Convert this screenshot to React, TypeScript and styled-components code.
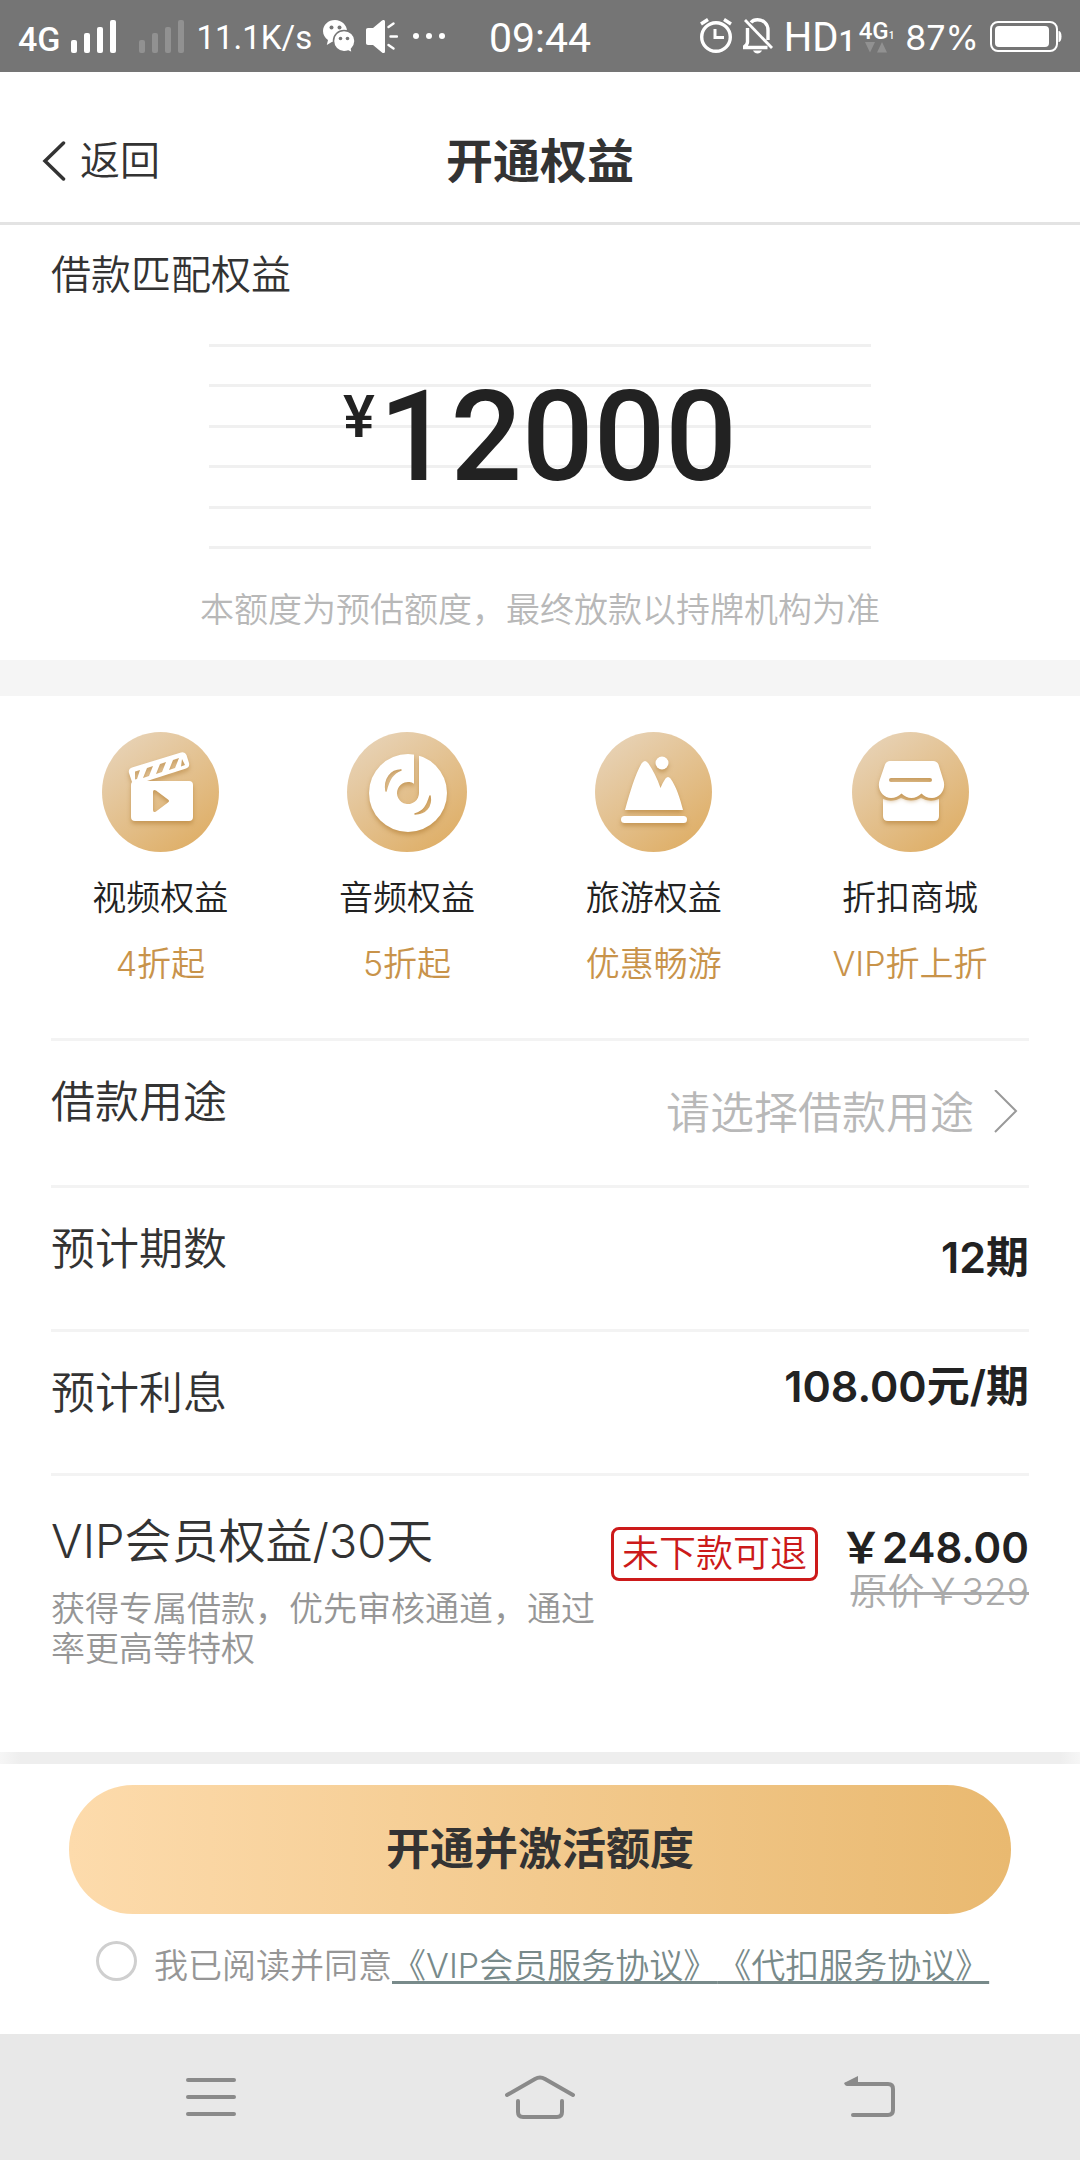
import React from "react";
import styled, { createGlobalStyle } from "styled-components";

const GlobalStyle = createGlobalStyle`
  *, *::before, *::after { box-sizing: border-box; }
  body {
    margin: 0;
    background: #ffffff;
    color: #333333;
    font-family: "Inter", "Noto Sans CJK SC", sans-serif;
    font-weight: 350;
  }
  button, select, input { font: inherit; color: inherit; margin: 0; }
  button { cursor: pointer; }
`;

const Page = styled.div`
  display: flex;
  flex-direction: column;
  min-height: 100vh;
`;

/* ---------- status bar ---------- */

const StatusBar = styled.div`
  display: grid;
  grid-template-columns: 1fr auto 1fr;
  align-items: center;
  height: 72px;
  padding: 0 18px;
  background: #757575;
  color: #ffffff;
  font-weight: 400;
  white-space: nowrap;
`;

const StatusGroup = styled.div<{ $end?: boolean }>`
  display: flex;
  align-items: center;
  justify-content: ${(p) => (p.$end ? "flex-end" : "flex-start")};
  gap: 11px;
`;

const NetworkSpeed = styled.span`
  padding-top: 3px;
  font-family: "Roboto", sans-serif;
  font-size: 33px;
  line-height: 40px;
`;

const BatteryLevel = styled.span`
  padding-top: 4px;
  font-size: 34px;
  line-height: 40px;
`;

const Clock = styled.span`
  padding-top: 4px;
  font-family: "Roboto", sans-serif;
  font-size: 41px;
  line-height: 40px;
`;

const NetworkName = styled.span`
  padding-top: 6px;
  font-family: "Roboto", sans-serif;
  font-size: 34px;
  line-height: 40px;
  font-weight: 500;
`;

const SimState = styled.span`
  display: flex;
  align-items: center;
  gap: 3px;
  font-family: "Roboto", sans-serif;
`;

const HdMark = styled.span`
  padding-top: 4px;
  font-size: 40px;
  line-height: 40px;
  small { font-size: 30px; line-height: 30px; font-weight: 500; }
`;

const DataMark = styled.span`
  display: flex;
  flex-direction: column;
  align-items: center;
  font-size: 24px;
  line-height: 22px;
  font-weight: 500;
  small { font-size: 10px; line-height: 10px; }
`;

/* ---------- title bar ---------- */

const TitleBar = styled.header`
  display: grid;
  grid-template-columns: 1fr auto 1fr;
  align-items: center;
  height: 153px;
  padding: 28px 42px 0;
  border-bottom: 3px solid #e3e3e3;
`;

const BackButton = styled.button`
  display: flex;
  align-items: center;
  justify-self: start;
  gap: 14px;
  padding: 0;
  border: 0;
  background: none;
  font-size: 40px;
  line-height: 56px;
`;

const PageTitle = styled.h1`
  margin: 0;
  font-size: 47px;
  line-height: 56px;
  font-weight: 700;
`;

/* ---------- amount ---------- */

const AmountSection = styled.section`
  padding: 22px 51px 25px;
  border-bottom: 36px solid #f5f5f5;
`;

const SectionTitle = styled.h2`
  margin: 0;
  font-size: 40px;
  line-height: 56px;
  font-weight: inherit;
`;

const AmountPanel = styled.div`
  display: grid;
  justify-items: center;
  margin: 41px 158px 0;
  > * { grid-area: 1 / 1; }
`;

const Rules = styled.div`
  display: flex;
  flex-direction: column;
  justify-content: space-between;
  width: 100%;
  height: 205px;
`;

const Rule = styled.span`
  height: 3px;
  background: #f0f0f0;
`;

const Amount = styled.p`
  display: flex;
  align-items: flex-start;
  gap: 4px;
  margin: 0;
  padding-top: 29px;
  color: #222222;
  font-family: "Roboto", sans-serif;
  font-size: 126px;
  line-height: 128px;
  font-weight: 500;
`;

const Currency = styled.span`
  padding-top: 12px;
  font-size: 60px;
  line-height: 64px;
`;

const AmountNote = styled.p`
  margin: 36px 0 0;
  color: #b8b8b8;
  font-size: 34px;
  line-height: 50px;
  text-align: center;
`;

/* ---------- benefits ---------- */

const BenefitList = styled.ul`
  display: flex;
  justify-content: space-around;
  margin: 0;
  padding: 36px 37px 51px;
  list-style: none;
`;

const Benefit = styled.li`
  display: flex;
  flex-direction: column;
  align-items: center;
  font-size: 34px;
  line-height: 46px;
  svg { display: block; }
  svg g { filter: drop-shadow(0 3px 2px rgba(170, 115, 40, 0.5)); }
`;

const BenefitName = styled.span`
  padding-top: 23px;
  color: #222222;
`;

const BenefitOffer = styled.span`
  padding-top: 20px;
  color: #c8934a;
`;

/* ---------- detail rows ---------- */

const Details = styled.div`
  flex: 1;
  padding: 0 51px;
`;

const Row = styled.div<{ $tall?: boolean }>`
  display: flex;
  align-items: flex-start;
  justify-content: space-between;
  height: ${(p) => (p.$tall ? 147 : 144)}px;
  border-top: 3px solid #f3f3f3;
  font-size: 44px;
  line-height: 60px;
`;

const RowLabel = styled.label`
  padding-top: 31px;
`;

const RowValue = styled.output<{ $raised?: boolean }>`
  padding-top: ${(p) => (p.$raised ? 24 : 39)}px;
  color: #222222;
  font-size: 43px;
  font-weight: 600;
`;

const Picker = styled.div`
  display: flex;
  align-items: center;
  align-self: center;
  gap: 20px;
  padding-right: 11px;
`;

const PurposeSelect = styled.select`
  appearance: none;
  padding: 0;
  border: 0;
  background: none;
  color: #b8b8b8;
  line-height: 60px;
`;

const PlanRow = styled.section`
  display: flex;
  align-items: flex-start;
  border-top: 3px solid #f3f3f3;
  padding: 35px 0 82px;
`;

const PlanText = styled.div`
  flex: 1;
`;

const PlanName = styled.h2`
  margin: 0;
  font-size: 47px;
  line-height: 60px;
  font-weight: inherit;
`;

const PlanDescription = styled.p`
  margin: 18px 0 0;
  color: #969696;
  font-size: 34px;
  line-height: 40px;
`;

const RefundTag = styled.span`
  margin-top: 16px;
  padding: 0 8px;
  border: 3px solid #cc1a1a;
  border-radius: 8px;
  color: #cc1a1a;
  font-size: 37px;
  line-height: 48px;
`;

const Prices = styled.div`
  display: flex;
  flex-direction: column;
  align-items: flex-end;
  margin-left: 22px;
  padding-top: 13px;
`;

const Price = styled.strong`
  color: #222222;
  font-size: 42px;
  line-height: 48px;
  font-weight: 600;
`;

const OldPrice = styled.del`
  color: #aaaaaa;
  font-size: 37px;
  line-height: 40px;
  text-decoration-thickness: 3px;
`;

/* ---------- action panel ---------- */

const ActionPanel = styled.footer`
  padding: 0 69px 43px;
  &::before {
    content: "";
    display: block;
    height: 12px;
    margin: 0 -69px 21px;
    background: linear-gradient(90deg, #f6f6f6, #eeeeee 20px, #eeeeee calc(100% - 20px), #f6f6f6);
  }
`;

const SubmitButton = styled.button`
  display: block;
  width: 100%;
  height: 129px;
  padding: 0 0 8px;
  border: 0;
  border-radius: 64px;
  background: linear-gradient(90deg, #fddbac, #e9b970);
  font-size: 44px;
  font-weight: 700;
`;

const Agreement = styled.div`
  display: flex;
  align-items: flex-start;
  gap: 17px;
  padding: 27px 0 0 27px;
  color: #969696;
  font-size: 34px;
  line-height: 50px;
  white-space: nowrap;
  text-spacing-trim: space-all;
`;

const AgreeBox = styled.input`
  appearance: none;
  flex: none;
  width: 41px;
  height: 40px;
  border: 3px solid #cfcfcf;
  border-radius: 50%;
  &:checked { background: #e9b970; }
`;

const AgreementLink = styled.a`
  color: #788a8a;
  text-decoration: underline;
  text-decoration-thickness: 3px;
  text-decoration-skip-ink: none;
  text-underline-offset: 3px;
`;

/* ---------- system navigation ---------- */

const SystemNav = styled.nav`
  display: grid;
  grid-template-columns: repeat(3, 1fr);
  align-items: center;
  height: 126px;
  padding: 0 46px;
  background: #e8e8e8;
`;

const NavButton = styled.button`
  display: flex;
  justify-content: center;
  padding: 0;
  border: 0;
  background: none;
  color: #8a8a8a;
`;

/* ---------- drawings ---------- */

const SignalBars = ({ dim = false }: { dim?: boolean }) => (
  <svg width="46" height="33" viewBox="0 0 46 33" fill="#fff" opacity={dim ? 0.2 : 1} aria-hidden="true">
    <rect x="0" y="20" width="6" height="13" rx="2" />
    <rect x="13" y="13" width="6" height="20" rx="2" />
    <rect x="26" y="7" width="6" height="26" rx="2" />
    <rect x="39" y="0" width="6" height="33" rx="2" />
  </svg>
);

const WechatIcon = () => (
  <svg width="32" height="33" viewBox="0 0 32 33" aria-hidden="true">
    <path fill="#fff" d="M12 0C5.400 0 0 4.800 0 11c0 3.700 1.900 6.900 5 9l-1.200 5 5.400-3.200c1 .2 2 .2 3 .2C18.500 21.500 24 17 24 11S18.600 0 12 0z" />
    <path fill="#fff" stroke="#757575" strokeWidth="1.500" d="M21 10.500c6 0 11 4.500 11 10.500 0 3.500-1.500 6-3.500 8l.8 4-4-2c-1.400.5-2.800.7-4.300.7-6 0-10.500-4.700-10.500-10.700s4.500-10.500 10.500-10.500z" />
    <g fill="#757575">
      <circle cx="8.500" cy="7.500" r="2" /><circle cx="16.500" cy="7.500" r="2" />
      <circle cx="17.500" cy="18.500" r="1.800" /><circle cx="24.500" cy="18.500" r="1.800" />
    </g>
  </svg>
);

const SpeakerIcon = () => (
  <svg width="32" height="33" viewBox="0 0 32 33" aria-hidden="true">
    <path fill="#fff" d="M2 8h5L16 .6c1.500-1.200 3-.6 3 1v29.800c0 1.600-1.500 2.200-3 1L7 25H2c-1.300 0-2-.8-2-2V10c0-1.200.7-2 2-2z" />
    <path stroke="#fff" strokeWidth="2.400" strokeLinecap="round" d="M22.500 7l5-3.500M24.500 16.500h6.500M22.500 25l5 3.500" />
  </svg>
);

const MoreDots = () => (
  <svg width="36" height="6" viewBox="0 0 36 6" fill="#fff" aria-hidden="true">
    <circle cx="7" cy="3" r="3" /><circle cx="20" cy="3" r="3" /><circle cx="33" cy="3" r="3" />
  </svg>
);

const AlarmIcon = () => (
  <svg width="32" height="36" viewBox="0 0 32 36" fill="none" stroke="#fff" strokeWidth="3.400" aria-hidden="true">
    <circle cx="16" cy="19" r="14.300" />
    <path d="M15 11v8.500h9" strokeWidth="3" />
    <path d="M1 6l7-4.500M31 6l-7-4.500" />
  </svg>
);

const MutedBellIcon = () => (
  <svg width="30" height="36" viewBox="0 0 30 36" fill="none" stroke="#fff" strokeWidth="3.400" aria-hidden="true">
    <path d="M8 4.500C9.500 2.500 12 1.700 14.500 1.700 20.500 1.700 25 6 25 12v10M4.500 10v14c0 2-1 3.500-4 5.500h24" />
    <path d="M2 2l27 28" strokeWidth="2.800" />
    <path d="M10 32.500h9c-1 2-2.500 3-4.500 3s-3.500-1-4.500-3z" fill="#fff" stroke="none" />
  </svg>
);

const DataArrows = () => (
  <svg width="22" height="11" viewBox="0 0 22 11" fill="#fff" opacity="0.2" aria-hidden="true">
    <path d="M0 0h10L5 10.500zM12 10.500h10L17 0z" />
  </svg>
);

const BatteryIcon = () => (
  <svg width="72" height="31" viewBox="0 0 72 31" aria-hidden="true">
    <rect x="1" y="1" width="66" height="29" rx="7" fill="none" stroke="#fff" strokeWidth="2" />
    <rect x="5" y="5" width="54" height="21" rx="4" fill="#fff" />
    <path fill="#fff" d="M68.500 10c2 0 3 2 3 5.500s-1 5.500-3 5.500z" />
  </svg>
);

const GoldFill = ({ id }: { id: string }) => (
  <defs>
    <linearGradient id={id} x1="0.15" y1="0.1" x2="0.75" y2="0.95">
      <stop offset="0" stopColor="#e7d1b3" />
      <stop offset="1" stopColor="#dfb06a" />
    </linearGradient>
  </defs>
);

const VideoIcon = () => (
  <svg width="117" height="120" viewBox="0 0 117 120" aria-hidden="true">
    <GoldFill id="gold-video" />
    <ellipse cx="58.500" cy="60" rx="58.500" ry="60" fill="url(#gold-video)" />
    <g fill="#fff" fillRule="evenodd">
      <path d="M33 49h54q4 0 4 4v32q0 4-4 4H33q-4 0-4-4V53q0-4 4-4zM51 60v18q0 3 3 1.500l12-9q2-1.500 0-3l-12-9q-3-1.500-3 1.500z" />
      <path d="M30 50l-3-9q-1-4 3-5.500l49-15q4-1 5.500 2.500l2.500 8q1 4-3 5.500L45 49zM33 39.500l5-1.500-3 9-2 .5zM45 36l6-2-4 10-6 2zM58 32l6-2-4 10-6 2zM71 28l6-2-4 10-6 2zM80 27l3 6-4 1.500z" />
    </g>
  </svg>
);

const AudioIcon = () => (
  <svg width="120" height="120" viewBox="0 0 120 120" aria-hidden="true">
    <GoldFill id="gold-audio" />
    <mask id="disc-cut">
      <rect width="120" height="120" fill="#fff" />
      <path d="M67 18h5v43a11 11 0 1 1-5-9.200z" fill="#000" />
      <path d="M39 59c-2-12 5-21 15-21-8 3-12 9-15 21zM83 64c2 11-5 18-15 18 9-3 12-8 15-18z" fill="#000" stroke="#000" strokeWidth="1.500" strokeLinejoin="round" />
    </mask>
    <circle cx="60" cy="60" r="60" fill="url(#gold-audio)" />
    <g>
      <circle cx="61" cy="61" r="39" fill="#fff" mask="url(#disc-cut)" />
    </g>
  </svg>
);

const TravelIcon = () => (
  <svg width="117" height="120" viewBox="0 0 117 120" aria-hidden="true">
    <GoldFill id="gold-travel" />
    <ellipse cx="58.500" cy="60" rx="58.500" ry="60" fill="url(#gold-travel)" />
    <g fill="#fff">
      <path d="M30 78C35 60 40 43 46.500 31.500Q50 26.500 53.500 31.500C58 38 62 46 65.500 56Q68 50 70.500 46.500 73 43.500 75.500 46.500C81 54 85 66 88 78z" />
      <circle cx="67" cy="31" r="6.500" />
      <rect x="26" y="84" width="66" height="7" rx="3.500" />
    </g>
  </svg>
);

const ShopIcon = () => (
  <svg width="117" height="120" viewBox="0 0 117 120" aria-hidden="true">
    <GoldFill id="gold-shop" />
    <ellipse cx="58.500" cy="60" rx="58.500" ry="60" fill="url(#gold-shop)" />
    <g fill="#fff">
      <path d="M31 67q9 4 18-1 10 5 20 0 9 5 18 1v17q0 5-5 5H36q-5 0-5-5z" />
    </g>
    <g fill="#fff" fillRule="evenodd">
      <path d="M38 29h43q4 0 5.500 3.500L91 47c4 10-3 19-11 19-5 0-8-2-10.500-4.500C67 64 63 66 59.500 66S52 64 49.500 61.500C47 64 43 66 39 66c-8 0-15-9-11-19l5-14.500Q34.500 29 38 29zM39 46a2 2 0 0 0 0 4h39a2 2 0 0 0 0-4z" />
    </g>
  </svg>
);

const benefits = [
  { name: "视频权益", offer: "4折起", Icon: VideoIcon },
  { name: "音频权益", offer: "5折起", Icon: AudioIcon },
  { name: "旅游权益", offer: "优惠畅游", Icon: TravelIcon },
  { name: "折扣商城", offer: "VIP折上折", Icon: ShopIcon },
];

export default function App() {
  return (
    <Page>
      <GlobalStyle />
      <StatusBar>
        <StatusGroup>
          <NetworkName>4G</NetworkName>
          <SignalBars />
          <span />
          <SignalBars dim />
          <NetworkSpeed>11.1K/s</NetworkSpeed>
          <WechatIcon />
          <SpeakerIcon />
          <MoreDots />
        </StatusGroup>
        <Clock>09:44</Clock>
        <StatusGroup $end>
          <AlarmIcon />
          <MutedBellIcon />
          <SimState>
            <HdMark>HD<small>1</small></HdMark>
            <DataMark>
              <span>4G<small>1</small></span>
              <DataArrows />
            </DataMark>
          </SimState>
          <BatteryLevel>87%</BatteryLevel>
          <BatteryIcon />
        </StatusGroup>
      </StatusBar>

      <TitleBar>
        <BackButton type="button">
          <svg width="24" height="40" viewBox="0 0 24 40" fill="none" stroke="#333" strokeWidth="3.500" strokeLinecap="round" aria-hidden="true">
            <path d="M21.500 2L3 20l18.500 18" />
          </svg>
          返回
        </BackButton>
        <PageTitle>开通权益</PageTitle>
      </TitleBar>

      <AmountSection>
        <SectionTitle>借款匹配权益</SectionTitle>
        <AmountPanel>
          <Rules>
            <Rule /><Rule /><Rule /><Rule /><Rule /><Rule />
          </Rules>
          <Amount><Currency>¥</Currency>12000</Amount>
        </AmountPanel>
        <AmountNote>本额度为预估额度，最终放款以持牌机构为准</AmountNote>
      </AmountSection>

      <BenefitList>
        {benefits.map(({ name, offer, Icon }) => (
          <Benefit key={name}>
            <Icon />
            <BenefitName>{name}</BenefitName>
            <BenefitOffer>{offer}</BenefitOffer>
          </Benefit>
        ))}
      </BenefitList>

      <Details>
        <Row $tall>
          <RowLabel htmlFor="purpose">借款用途</RowLabel>
          <Picker>
            <PurposeSelect id="purpose" defaultValue="">
              <option value="">请选择借款用途</option>
            </PurposeSelect>
            <svg width="24" height="46" viewBox="0 0 24 46" fill="none" stroke="#999" strokeWidth="2" aria-hidden="true">
              <path d="M1 0l21 21L1 42" />
            </svg>
          </Picker>
        </Row>
        <Row>
          <RowLabel htmlFor="periods">预计期数</RowLabel>
          <RowValue id="periods">12期</RowValue>
        </Row>
        <Row>
          <RowLabel htmlFor="interest">预计利息</RowLabel>
          <RowValue id="interest" $raised>108.00元/期</RowValue>
        </Row>
        <PlanRow>
          <PlanText>
            <PlanName>VIP会员权益/30天</PlanName>
            <PlanDescription>获得专属借款，优先审核通道，通过率更高等特权</PlanDescription>
          </PlanText>
          <RefundTag>未下款可退</RefundTag>
          <Prices>
            <Price>￥248.00</Price>
            <OldPrice>原价￥329</OldPrice>
          </Prices>
        </PlanRow>
      </Details>

      <ActionPanel>
        <SubmitButton type="button">开通并激活额度</SubmitButton>
        <Agreement>
          <AgreeBox type="checkbox" id="agree" />
          <span>
            <label htmlFor="agree">我已阅读并同意</label>
            <AgreementLink href="#vip-terms">《VIP会员服务协议》</AgreementLink>
            <AgreementLink href="#debit-terms">《代扣服务协议》</AgreementLink>
          </span>
        </Agreement>
      </ActionPanel>

      <SystemNav>
        <NavButton type="button" aria-label="menu">
          <svg width="50" height="42" viewBox="0 0 50 42" stroke="currentColor" strokeWidth="4" strokeLinecap="round">
            <path d="M2 4h46M2 21h46M2 38h46" />
          </svg>
        </NavButton>
        <NavButton type="button" aria-label="home">
          <svg width="72" height="46" viewBox="0 0 72 46" fill="none" stroke="currentColor" strokeWidth="4" strokeLinecap="round" strokeLinejoin="round">
            <path d="M3 21L31 5q5-3 10 0l28 16" />
            <path d="M14 27v11q0 5 5 5h34q5 0 5-5V27" />
          </svg>
        </NavButton>
        <NavButton type="button" aria-label="back">
          <svg width="52" height="44" viewBox="0 0 52 44" fill="none" stroke="currentColor" strokeWidth="4" strokeLinecap="round">
            <path d="M4 9h41q5 0 5 5v21q0 5-5 5H10" />
            <path d="M1 8L15 1v9H2z" fill="currentColor" stroke="none" />
          </svg>
        </NavButton>
      </SystemNav>
    </Page>
  );
}
